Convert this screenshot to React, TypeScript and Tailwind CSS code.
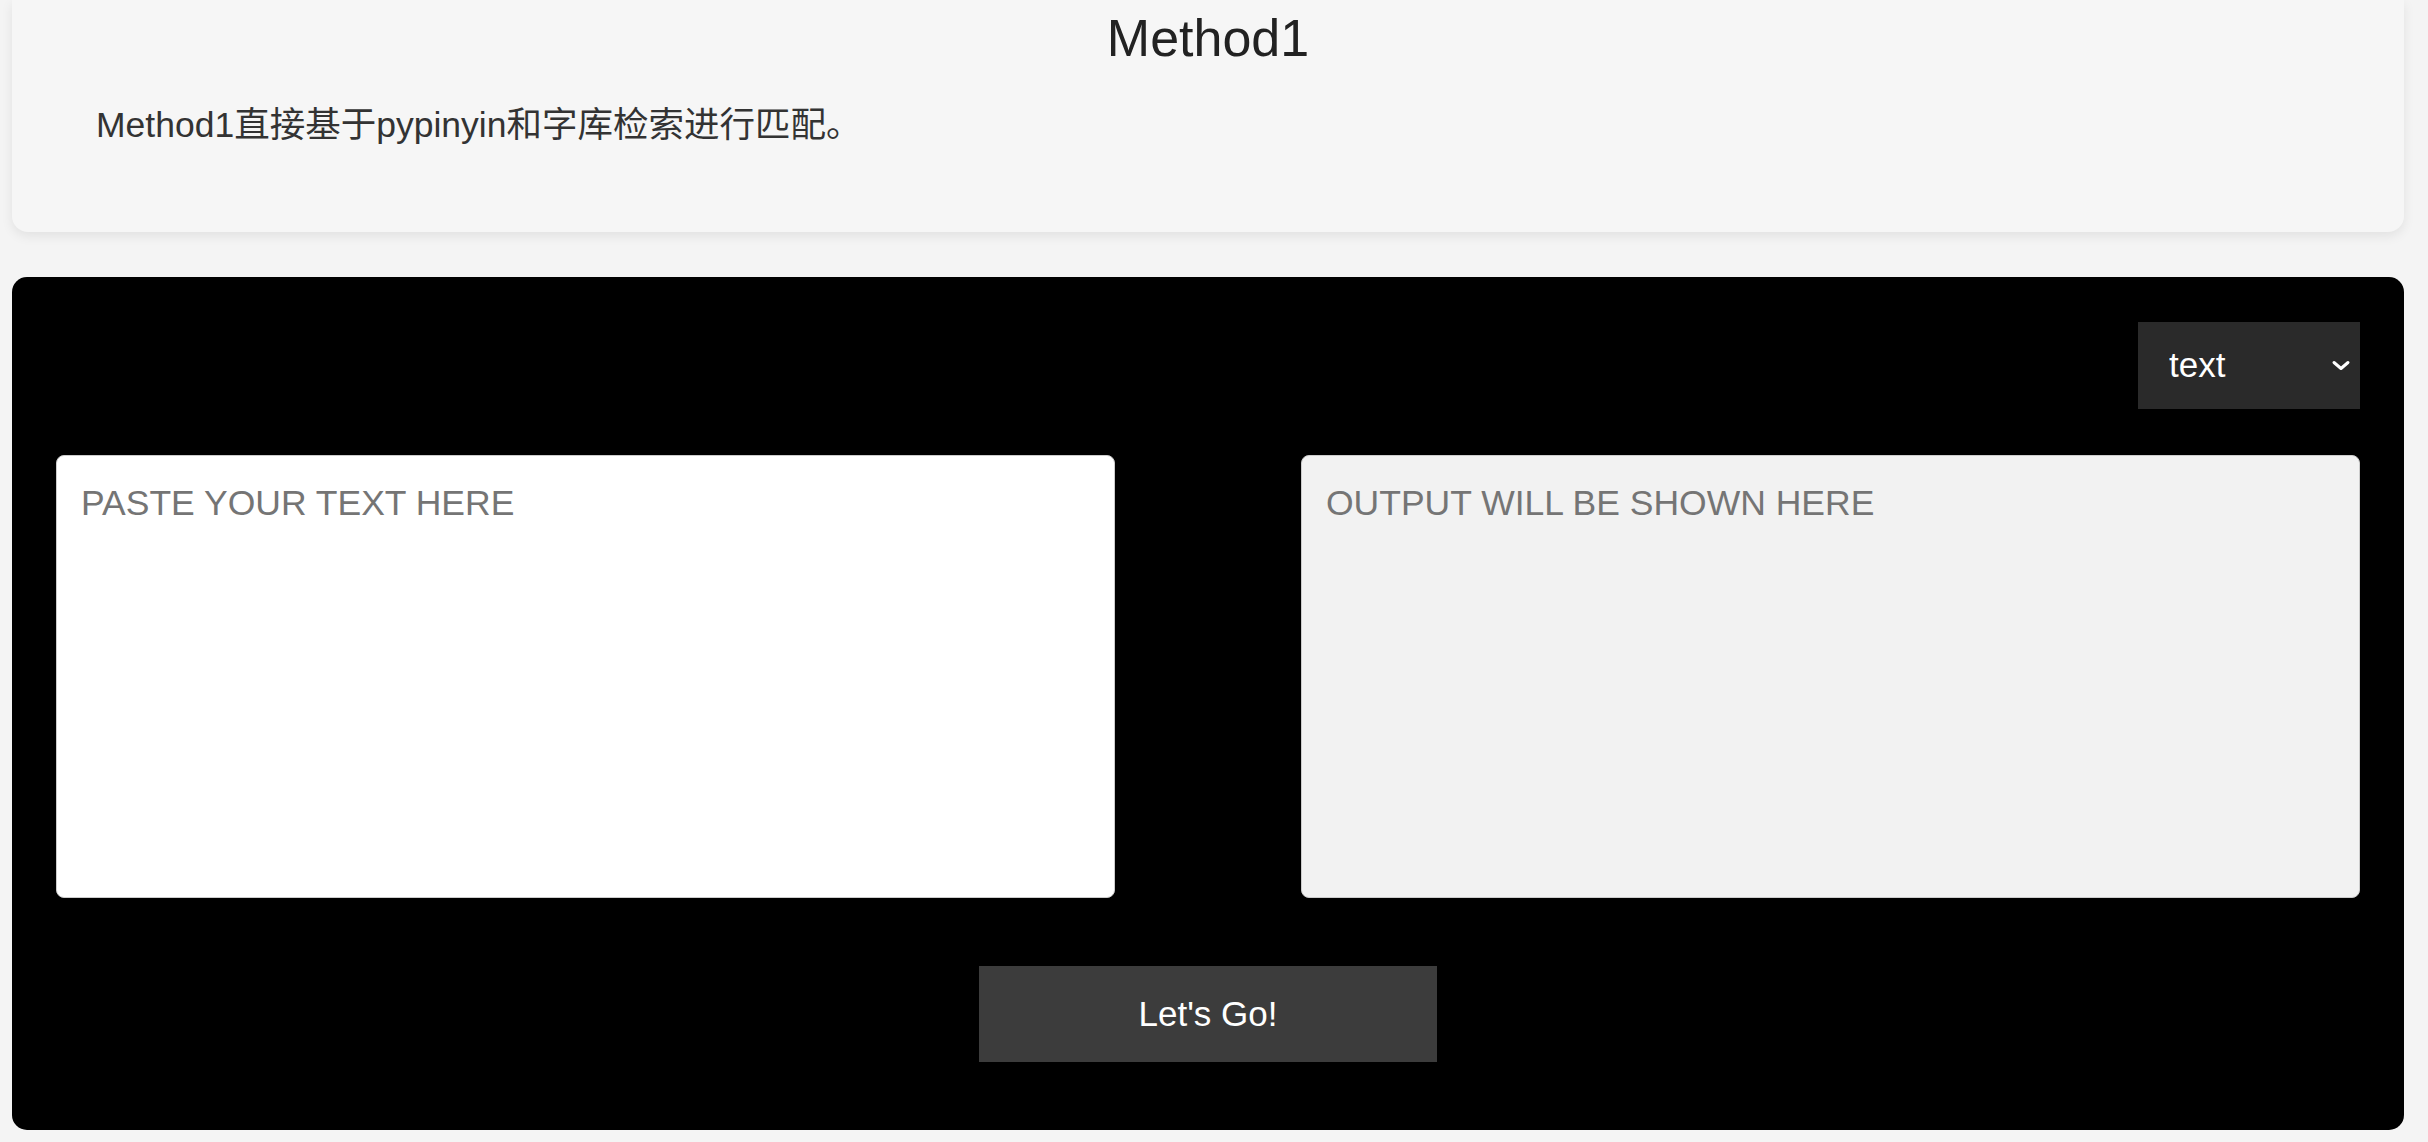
import { useState } from 'react';

const font = 'font-["Liberation_Sans","Noto_Sans_CJK_SC",sans-serif]';

export default function App() {
  const [input, setInput] = useState('');
  const [mode, setMode] = useState('text');

  return (
    <div className={`min-h-screen bg-[#f4f4f4] pb-3 pl-3 pr-6 ${font}`}>
      <div className="rounded-b-2xl bg-[#f6f6f6] pb-[87px] pt-[9px] shadow-[0_4px_12px_rgba(0,0,0,0.08)]">
        <h1 className="text-center text-[52px] leading-[58px] text-[#222]">Method1</h1>
        <p className="mt-[38px] pl-[84px] text-[35.5px] leading-[40px] text-[#333]">
          Method1直接基于pypinyin和字库检索进行匹配。
        </p>
      </div>

      <div className="mt-[45px] rounded-[15px] bg-black px-[44px] pb-[68px] pt-[45px]">
        <div className="flex justify-end">
          <div className="relative">
            <select
              value={mode}
              onChange={(e) => setMode(e.target.value)}
              className="h-[87px] w-[222px] appearance-none bg-[#2a2a2a] pl-[31px] text-[35px] text-white outline-none"
            >
              <option value="text">text</option>
              <option value="pinyin">pinyin</option>
            </select>
            <svg
              className="pointer-events-none absolute right-[9px] top-[37px] h-[13px] w-[20px]"
              viewBox="0 0 20 13"
              fill="none"
              stroke="white"
              strokeWidth="3"
              strokeLinecap="round"
              strokeLinejoin="round"
            >
              <path d="M3 3.5l7 6 7-6" />
            </svg>
          </div>
        </div>

        <div className="mt-[46px] grid grid-cols-2 gap-[186px]">
          <textarea
            value={input}
            onChange={(e) => setInput(e.target.value)}
            placeholder="PASTE YOUR TEXT HERE"
            className="h-[443px] resize-none rounded-lg border border-[#ccc] bg-white px-6 pt-[27px] text-[35.5px] leading-[40px] text-[#333] outline-none placeholder:text-[#757575]"
          />
          <textarea
            readOnly
            placeholder="OUTPUT WILL BE SHOWN HERE"
            className="h-[443px] resize-none rounded-lg border border-[#ccc] bg-[#f2f2f2] px-6 pt-[27px] text-[35.5px] leading-[40px] text-[#333] outline-none placeholder:text-[#757575]"
          />
        </div>

        <div className="mt-[68px] flex justify-center">
          <button type="button" className="h-[96px] w-[458px] bg-[#3c3c3c] text-[35px] text-white">
            Let&apos;s Go!
          </button>
        </div>
      </div>
    </div>
  );
}
